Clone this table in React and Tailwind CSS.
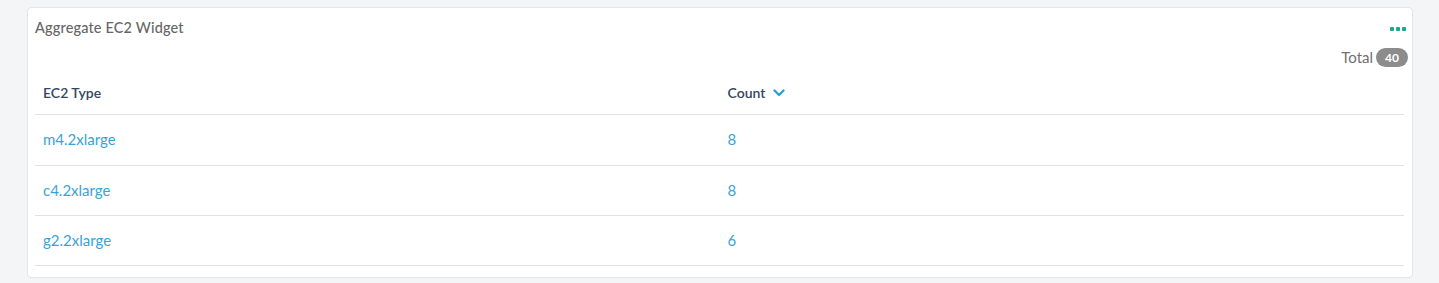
export default function App() {
  const rows = [
    ["m4.2xlarge", 8],
    ["c4.2xlarge", 8],
    ["g2.2xlarge", 6],
  ];
  return (
    <div className="w-[1439px] h-[283px] bg-[#f4f5f7] pt-[7px] pl-[27px] font-['Lato',sans-serif] overflow-hidden">
      <div className="w-[1386px] h-[271px] bg-white border border-[#e3e5e8] rounded-[4px] pl-[7px] pr-[8px] pt-[10px]">
        <div className="flex items-center justify-between h-[20px]">
          <span className="text-[14.5px] text-[#666] font-medium tracking-[0.15px]">Aggregate EC2 Widget</span>
          <span className="flex gap-[2px] mr-[-2px] mt-[2px]">
            <span className="w-[4px] h-[4px] rounded-[1px] bg-[#19a98a]"></span>
            <span className="w-[4px] h-[4px] rounded-[1px] bg-[#19a98a]"></span>
            <span className="w-[4px] h-[4px] rounded-[1px] bg-[#19a98a]"></span>
          </span>
        </div>
        <div className="flex items-center justify-end h-[20px] mt-[9px] mr-[-4px]">
          <span className="text-[15px] text-[#707070] mr-[3px]">Total</span>
          <span className="h-[19px] px-[9px] rounded-full bg-[#8c8c8c] text-white text-[12px] font-bold leading-[19px]">40</span>
        </div>
        <table className="w-full border-collapse mt-[5px] table-fixed">
          <thead>
            <tr className="h-[42px] border-b border-[#e1e1e1]">
              <th className="text-left px-[8px] text-[14px] font-semibold text-[#34475d]">EC2 Type</th>
              <th className="text-left px-[8px] text-[14px] font-semibold text-[#34475d]">
                <span className="inline-flex items-center gap-[8px]">
                  Count
                  <svg width="12" height="8" viewBox="0 0 12 8">
                    <path d="M1.5 1.5 L6 6 L10.5 1.5" fill="none" stroke="#2c9fd6" strokeWidth="2.4" strokeLinecap="round" strokeLinejoin="round" />
                  </svg>
                </span>
              </th>
            </tr>
          </thead>
          <tbody>
            {rows.map(([t, c], i) => (
              <tr key={t} className={(i === 0 ? "h-[51px]" : "h-[50px]") + " border-b border-[#e1e1e1]"}>
                <td className="px-[8px] text-[15px] text-[#38a3d8]">{t}</td>
                <td className="px-[8px] text-[15px] text-[#38a3d8]">{c}</td>
              </tr>
            ))}
          </tbody>
        </table>
      </div>
    </div>
  );
}
